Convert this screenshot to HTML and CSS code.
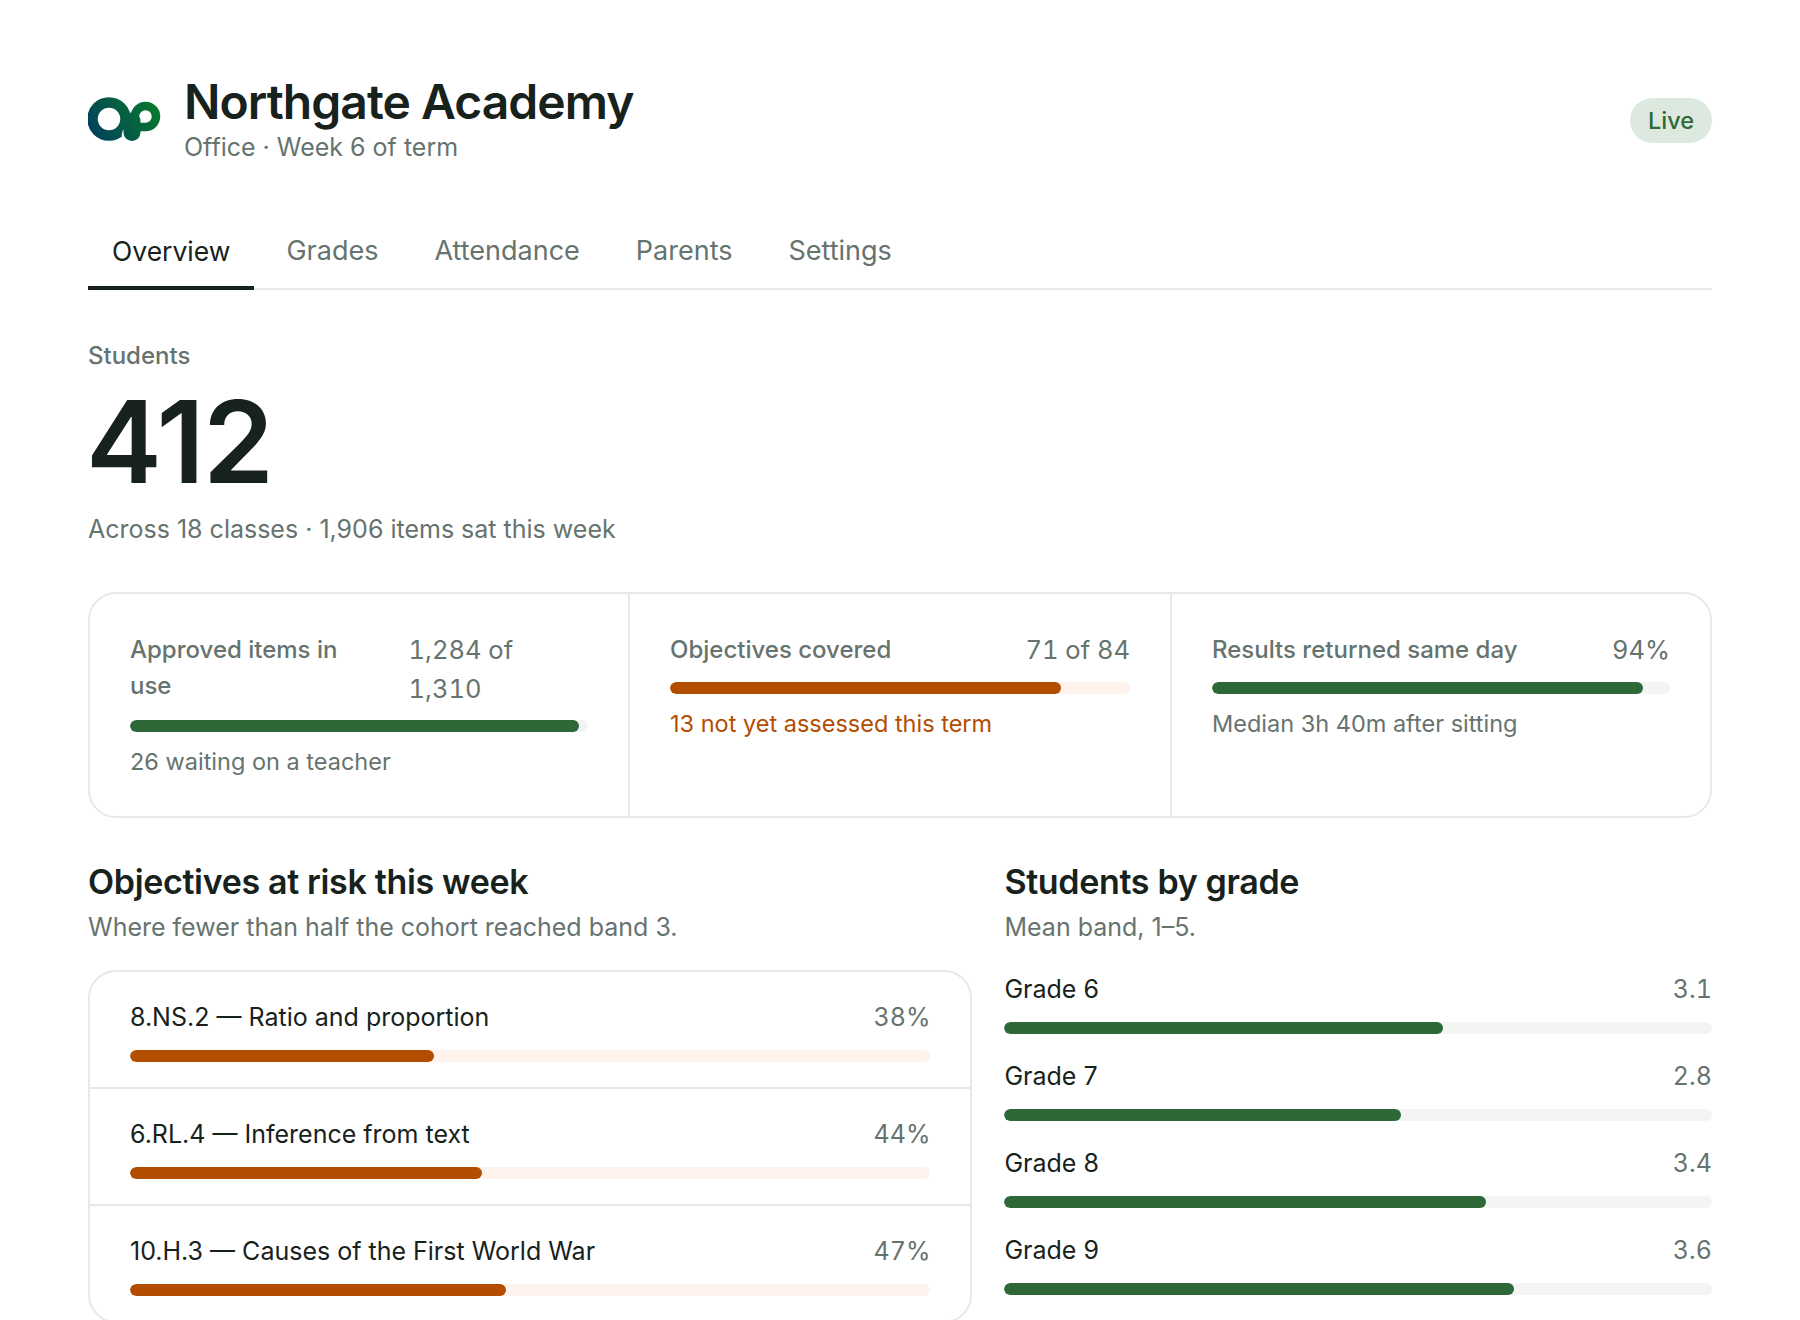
FILE: index.html
```html
<!DOCTYPE html>
<html lang="en">
<head>
<meta charset="utf-8">
<title>Northgate Academy</title>
<link rel="stylesheet" href="styles.css">
</head>
<body>
<main class="page">
  <header class="header">
    <div class="brand">
      <svg class="logo" viewBox="0 0 74 46" width="74" height="46" aria-hidden="true">
        <defs>
          <linearGradient id="lg" gradientUnits="userSpaceOnUse" x1="6" y1="44" x2="66" y2="8">
            <stop offset="0" stop-color="#00405c"/>
            <stop offset="1" stop-color="#08782f"/>
          </linearGradient>
        </defs>
        <circle cx="21" cy="22" r="16.5" fill="none" stroke="url(#lg)" stroke-width="10.5"/>
        <path d="M44 38V39" fill="none" stroke="#fff" stroke-width="20.5" stroke-linecap="round"/>
        <path d="M44 24V35.5" fill="none" stroke="url(#lg)" stroke-width="17" stroke-linecap="round"/>
        <path d="M47 19.5A10.5 10.5 0 1 1 57.5 30H50" fill="none" stroke="url(#lg)" stroke-width="8.5"/>
      </svg>
      <div class="brand-text">
        <h1 class="title">Northgate Academy</h1>
        <p class="subtitle">Office · Week 6 of term</p>
      </div>
    </div>
    <span class="pill">Live</span>
  </header>

  <nav class="tabs">
    <a class="tab tab-active">Overview</a>
    <a class="tab">Grades</a>
    <a class="tab">Attendance</a>
    <a class="tab">Parents</a>
    <a class="tab">Settings</a>
  </nav>

  <section class="hero">
    <div class="hero-label">Students</div>
    <div class="hero-value">412</div>
    <div class="hero-note">Across 18 classes · 1,906 items sat this week</div>
  </section>

  <section class="kpis">
    <div class="kpi">
      <div class="kpi-head"><span class="kpi-label">Approved items in use</span><span class="kpi-value">1,284 of 1,310</span></div>
      <div class="bar"><div class="fill fill-green" style="width:98%"></div></div>
      <div class="kpi-note">26 waiting on a teacher</div>
    </div>
    <div class="kpi">
      <div class="kpi-head"><span class="kpi-label">Objectives covered</span><span class="kpi-value">71 of 84</span></div>
      <div class="bar bar-warm"><div class="fill fill-orange" style="width:85%"></div></div>
      <div class="kpi-note kpi-note-warn">13 not yet assessed this term</div>
    </div>
    <div class="kpi">
      <div class="kpi-head"><span class="kpi-label">Results returned same day</span><span class="kpi-value">94%</span></div>
      <div class="bar"><div class="fill fill-green" style="width:94%"></div></div>
      <div class="kpi-note">Median 3h 40m after sitting</div>
    </div>
  </section>

  <section class="columns">
    <div class="col">
      <h2 class="col-title">Objectives at risk this week</h2>
      <p class="col-sub">Where fewer than half the cohort reached band 3.</p>
      <div class="risk-card">
        <div class="risk-row">
          <div class="row-head"><span class="row-label">8.NS.2 — Ratio and proportion</span><span class="row-value">38%</span></div>
          <div class="bar bar-warm row-bar"><div class="fill fill-orange" style="width:38%"></div></div>
        </div>
        <div class="risk-row">
          <div class="row-head"><span class="row-label">6.RL.4 — Inference from text</span><span class="row-value">44%</span></div>
          <div class="bar bar-warm row-bar"><div class="fill fill-orange" style="width:44%"></div></div>
        </div>
        <div class="risk-row">
          <div class="row-head"><span class="row-label">10.H.3 — Causes of the First World War</span><span class="row-value">47%</span></div>
          <div class="bar bar-warm row-bar"><div class="fill fill-orange" style="width:47%"></div></div>
        </div>
      </div>
    </div>
    <div class="col">
      <h2 class="col-title">Students by grade</h2>
      <p class="col-sub">Mean band, 1–5.</p>
      <div class="grades">
        <div class="grade">
          <div class="row-head"><span class="row-label">Grade 6</span><span class="row-value">3.1</span></div>
          <div class="bar row-bar"><div class="fill fill-green" style="width:62%"></div></div>
        </div>
        <div class="grade">
          <div class="row-head"><span class="row-label">Grade 7</span><span class="row-value">2.8</span></div>
          <div class="bar row-bar"><div class="fill fill-green" style="width:56%"></div></div>
        </div>
        <div class="grade">
          <div class="row-head"><span class="row-label">Grade 8</span><span class="row-value">3.4</span></div>
          <div class="bar row-bar"><div class="fill fill-green" style="width:68%"></div></div>
        </div>
        <div class="grade">
          <div class="row-head"><span class="row-label">Grade 9</span><span class="row-value">3.6</span></div>
          <div class="bar row-bar"><div class="fill fill-green" style="width:72%"></div></div>
        </div>
      </div>
    </div>
  </section>
</main>
</body>
</html>
```
FILE: styles.css
```css
* { box-sizing: border-box; }
html, body { margin: 0; height: 1320px; overflow: hidden; background: #fff; }
body { font-family: Inter, "Liberation Sans", sans-serif; color: #17221d; line-height: 1.5; }
.page { padding: 74px 88px 0; }

.header { display: flex; justify-content: space-between; align-items: center; }
.brand { display: flex; align-items: center; gap: 22px; }
.logo { display: block; }
.title { margin: 0; font-size: 48px; line-height: 55px; font-weight: 600; letter-spacing: -0.96px; }
.subtitle { margin: 0; font-size: 25px; line-height: 37px; color: #66736e; }
.pill { background: #dde9df; color: #2f6838; font-size: 23.5px; line-height: 33px; font-weight: 500; padding: 6px 18px; border-radius: 999px; }

.tabs { display: flex; gap: 8px; margin-top: 48px; border-bottom: 2px solid #e6e9e7; }
.tab { padding: 17px 24px 15px; font-size: 27px; line-height: 40px; color: #66736e; margin-bottom: -2px; border-bottom: 4px solid transparent; }
.tab-active { color: #17221d; border-bottom-color: #17221d; font-size: 26.5px; }

.hero { margin-top: 48px; }
.hero-label { font-size: 24px; line-height: 36px; font-weight: 500; color: #66736e; }
.hero-value { font-size: 114px; line-height: 120px; font-weight: 600; letter-spacing: -1.7px; margin: 8px 0 9px -2px; }
.hero-note { font-size: 25px; line-height: 37px; color: #66736e; }

.kpis { display: grid; grid-template-columns: repeat(3, 1fr); margin-top: 44px; border: 2px solid #e6e9e7; border-radius: 28px; }
.kpi { padding: 36px 40px 37px; }
.kpi:first-child { border-right: 2px solid #e6e9e7; }
.kpi:last-child { border-left: 2px solid #e6e9e7; }
.kpi-head { display: flex; justify-content: space-between; gap: 30px; min-height: 40px; color: #66736e; }
.kpi-label { font-size: 24px; line-height: 36px; font-weight: 500; margin-top: 2px; }
.kpi-value { font-size: 25.5px; line-height: 39px; font-variant-numeric: tabular-nums; }
.bar { height: 12px; border-radius: 6px; background: #f2f5f2; overflow: hidden; margin-top: 12px; }
.bar-warm { background: #fdf3ec; }
.fill { height: 100%; border-radius: 6px; }
.fill-green { background: #2f6838; }
.fill-orange { background: #b34d00; }
.kpi-note { font-size: 23.5px; line-height: 35px; color: #66736e; margin-top: 12px; }
.kpi-note-warn { color: #b34d00; }

.columns { display: grid; grid-template-columns: 5fr 4fr; gap: 32px; margin-top: 43px; }
.col-title { margin: 0; font-size: 34px; line-height: 41px; font-weight: 600; letter-spacing: -0.34px; }
.col-sub { margin: 7px 0 0; font-size: 25px; line-height: 37px; color: #66736e; }
.risk-card { border: 2px solid #e6e9e7; border-radius: 28px; margin-top: 24px; }
.risk-row { padding: 27px 40px 25px; }
.risk-row + .risk-row { border-top: 2px solid #e6e9e7; }
.row-head { display: flex; justify-content: space-between; font-size: 25px; line-height: 37px; }
.row-value { color: #66736e; font-variant-numeric: tabular-nums; }
.row-bar { margin-top: 14px; }
.grades { margin-top: 25px; display: flex; flex-direction: column; gap: 24px; }
```
